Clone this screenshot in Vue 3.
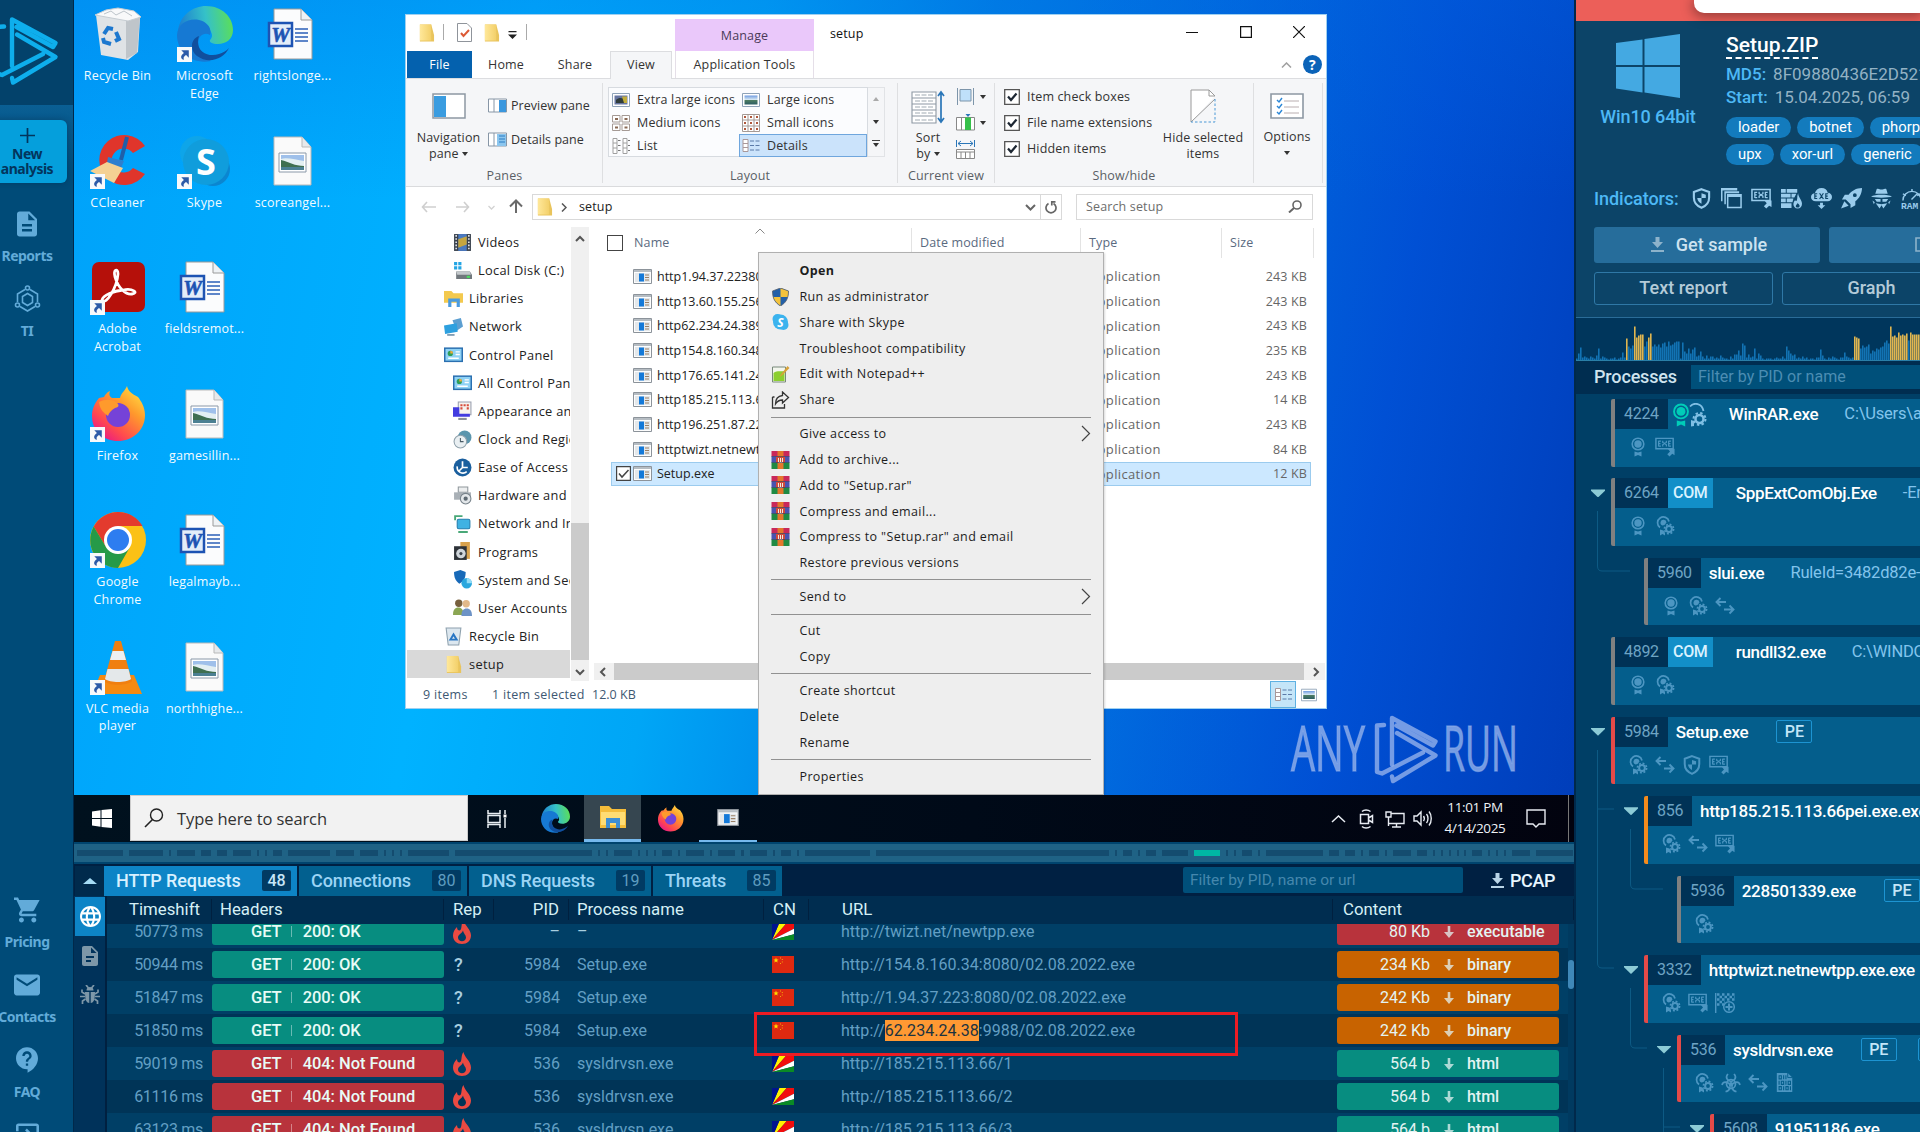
<script setup>
const shortcuts = [
  { label: 'Recycle Bin', icon: 'bin' },
  { label: 'Microsoft Edge', icon: 'edge', link: true },
  { label: 'rightslonge...', icon: 'word' },
  { label: 'CCleaner', icon: 'ccleaner', link: true },
  { label: 'Skype', icon: 'skype', link: true },
  { label: 'scoreangel...', icon: 'picture' },
  { label: 'Adobe Acrobat', icon: 'acrobat', link: true },
  { label: 'fieldsremot...', icon: 'word' },
  null,
  { label: 'Firefox', icon: 'firefox', link: true },
  { label: 'gamesillin...', icon: 'picture' },
  null,
  { label: 'Google Chrome', icon: 'chrome', link: true },
  { label: 'legalmayb...', icon: 'word' },
  null,
  { label: 'VLC media player', icon: 'vlc', link: true },
  { label: 'northhighe...', icon: 'picture' },
  null,
]

const navItems = [
  { label: 'Videos', icon: 'n-video', deep: true },
  { label: 'Local Disk (C:)', icon: 'n-disk', deep: true },
  { label: 'Libraries', icon: 'n-lib' },
  { label: 'Network', icon: 'n-net' },
  { label: 'Control Panel', icon: 'n-cp' },
  { label: 'All Control Panel Items', icon: 'n-cp', deep: true },
  { label: 'Appearance and Personalization', icon: 'n-app', deep: true },
  { label: 'Clock and Region', icon: 'n-clock', deep: true },
  { label: 'Ease of Access', icon: 'n-ease', deep: true },
  { label: 'Hardware and Sound', icon: 'n-hw', deep: true },
  { label: 'Network and Internet', icon: 'n-ni', deep: true },
  { label: 'Programs', icon: 'n-prog', deep: true },
  { label: 'System and Security', icon: 'n-sec', deep: true },
  { label: 'User Accounts', icon: 'n-user', deep: true },
  { label: 'Recycle Bin', icon: 'n-bin' },
  { label: 'setup', icon: 'folder', on: true },
]

const files = [
  ['http1.94.37.2238080', '243 KB'],
  ['http13.60.155.256', '243 KB'],
  ['http62.234.24.389988', '243 KB'],
  ['http154.8.160.348080', '235 KB'],
  ['http176.65.141.24', '243 KB'],
  ['http185.215.113.66', '14 KB'],
  ['http196.251.87.22', '243 KB'],
  ['httptwizt.netnewtpp', '84 KB'],
  ['Setup.exe', '12 KB'],
]

const menu = [
  [
    { t: 'Open', bold: true },
    { t: 'Run as administrator', icon: 'm-shield' },
    { t: 'Share with Skype', icon: 'm-skype' },
    { t: 'Troubleshoot compatibility' },
    { t: 'Edit with Notepad++', icon: 'm-npp' },
    { t: 'Share', icon: 'm-share' },
  ],
  [
    { t: 'Give access to', sub: true },
    { t: 'Add to archive...', icon: 'm-rar' },
    { t: 'Add to "Setup.rar"', icon: 'm-rar' },
    { t: 'Compress and email...', icon: 'm-rar' },
    { t: 'Compress to "Setup.rar" and email', icon: 'm-rar' },
    { t: 'Restore previous versions' },
  ],
  [{ t: 'Send to', sub: true }],
  [{ t: 'Cut' }, { t: 'Copy' }],
  [{ t: 'Create shortcut' }, { t: 'Delete' }, { t: 'Rename' }],
  [{ t: 'Properties' }],
]

const strip = [
  77, 123, 129, 163, 169, 171, 177, 195, 201, 211, 217, 227, 233, 251, 257, 259, 265, 267, 273, 282, 288, 330, 336, 354,
  360, 378, 384, 386, 392, 394, 400, 402, 408, 449, 455, 592, 598, 600, 606, 608, 614, 632, 638, 640, 646, 648, 654, 656,
  662, 672, 678, 680, 686, 704, 710, 712, 718, 735, 741, 744, 750, 767, 773, 775, 781, 791, 797, 799, 805, 870, 876, 1109,
  1115, 1117, 1123, 1132, 1138, 1140, 1146, 1156, 1162, 1188, 1194, 1220, 1226, 1228, 1234, 1236, 1242, 1252, 1258, 1260,
  1266, 1323, 1329, 1339, 1345, 1355, 1361, 1363, 1369, 1379, 1385, 1387, 1393, 1411, 1417, 1427, 1433, 1435, 1441, 1443,
  1449, 1451, 1457, 1459, 1464, 1466, 1472, 1482, 1488, 1490, 1496, 1498, 1504, 1506, 1512, 1530, 1536, 1573,
]
const stripBlocks = []
for (let i = 0; i < strip.length; i += 2) {
  stripBlocks.push({ x: strip[i] - 74, w: strip[i + 1] - strip[i], on: strip[i] === 1194 })
}

const tabs = [
  { t: 'HTTP Requests', n: 48, w: 193, on: true },
  { t: 'Connections', n: 80, w: 168 },
  { t: 'DNS Requests', n: 19, w: 182 },
  { t: 'Threats', n: 85, w: 129 },
]

const requests = [
  { ms: 50773, ok: true, pid: '–', name: '–', cn: 'sc', url: ['http://twizt.net/newtpp.exe'], size: '80 Kb', kind: 'executable' },
  { ms: 50944, ok: true, pid: '5984', name: 'Setup.exe', cn: 'cn', url: ['http://154.8.160.34:8080/02.08.2022.exe'], size: '234 Kb', kind: 'binary' },
  { ms: 51847, ok: true, pid: '5984', name: 'Setup.exe', cn: 'cn', url: ['http://1.94.37.223:8080/02.08.2022.exe'], size: '242 Kb', kind: 'binary' },
  { ms: 51850, ok: true, pid: '5984', name: 'Setup.exe', cn: 'cn', url: ['http://', '62.234.24.38', ':9988/02.08.2022.exe'], size: '242 Kb', kind: 'binary' },
  { ms: 59019, ok: false, pid: '536', name: 'sysldrvsn.exe', cn: 'sc', url: ['http://185.215.113.66/1'], size: '564 b', kind: 'html' },
  { ms: 61116, ok: false, pid: '536', name: 'sysldrvsn.exe', cn: 'sc', url: ['http://185.215.113.66/2'], size: '564 b', kind: 'html' },
  { ms: 63123, ok: false, pid: '536', name: 'sysldrvsn.exe', cn: 'sc', url: ['http://185.215.113.66/3'], size: '564 b', kind: 'html' },
]

const indicators = ['i-shield', 'i-windows', 'i-exe', 'i-wall', 'i-cloud', 'i-rocket', 'i-spy', 'i-ram']

const procs = [
  { lvl: 0, pid: '4224', cert: true, name: 'WinRAR.exe', pad: 21, args: 'C:\\Users\\admin', icons: ['p-cert', 'i-exe'] },
  { lvl: 0, open: true, pid: '6264', com: true, name: 'SppExtComObj.Exe', pad: 23, args: '-Embedding', icons: ['p-cert', 'p-certgear'] },
  { lvl: 1, pid: '5960', name: 'slui.exe', pad: 8, args: 'RuleId=3482d82e-ca2c', icons: ['p-cert', 'p-certgear', 'p-arrows'] },
  { lvl: 0, pid: '4892', com: true, name: 'rundll32.exe', pad: 23, args: 'C:\\WINDOWS', icons: ['p-cert', 'p-certgear'] },
  { lvl: 0, open: true, color: 'red', pid: '5984', name: 'Setup.exe', pad: 8, pe: true, icons: ['p-certgear', 'p-arrows', 'i-shield', 'i-exe'] },
  { lvl: 1, open: true, color: 'orange', pid: '856', name: 'http185.215.113.66pei.exe.exe', pad: 8, icons: ['p-certgear', 'p-arrows', 'i-exe'] },
  { lvl: 2, pid: '5936', name: '228501339.exe', pad: 8, pe: true, icons: ['p-certgear'] },
  { lvl: 1, open: true, color: 'red', pid: '3332', name: 'httptwizt.netnewtpp.exe.exe', pad: 8, icons: ['p-certgear', 'i-exe', 'p-flag'] },
  { lvl: 2, open: true, color: 'red', pid: '536', name: 'sysldrvsn.exe', pad: 8, pe: true, pe2: true, icons: ['p-certgear', 'p-bio', 'p-arrows', 'p-bin'] },
  { lvl: 3, open: true, color: 'red', pid: '5608', name: '91951186.exe', pad: 8, icons: [] },
]

const cpu = [
  2, 7, 13, 3, 4, 3, 2, 4, 3, 2, 5, 12, 2, 4, 3, 2, 1, 2, 2, 3, 1, 2, 3, 8, 3, -22, 14, 12, 15, -34, -23, -25, -26, -26,
  14, 19, -23, -27, 14, 16, 14, 16, 13, 17, 18, 14, 19, 15, 16, 18, 19, 19, 2, 18, 9, 7, 12, 7, 11, 13, 4, 5, 9, 4, 2, 5,
  2, 4, 4, 2, 3, 2, 5, 3, 2, 2, 1, 4, 2, 6, 6, 10, 5, 17, 15, 3, 6, 3, 4, 12, 2, 7, 5, 2, 1, 2, 2, 2, 1, 2, 3, 2, 2, 4,
  2, 14, 10, 7, 5, 6, 2, 3, 2, 4, 2, 3, 1, 2, 2, 1, 3, 3, 11, 5, 2, 1, 3, 2, 4, 3, 2, 1, 3, 3, 8, 4, 3, 2, 3, -24, -23,
  -22, 12, 15, 13, 14, 16, 7, 10, 9, 12, 11, 13, 14, 18, 20, 17, -34, -24, -25, -23, -28, -25, -26, -25, -27, 20, -28, -26,
  -26, -26, -26, -26,
]
</script>

<template>
  <div class="page">
    <svg class="sprite" aria-hidden="true">
      <defs>
        <linearGradient id="gEdge" x1="0" y1="0.3" x2="1" y2="0.2"><stop offset="0" stop-color="#1d7fd0" /><stop offset=".5" stop-color="#35c1c8" /><stop offset="1" stop-color="#5ee052" /></linearGradient>
        <linearGradient id="gFox" x1="1" y1="0" x2="0.2" y2="1"><stop offset="0" stop-color="#fff04a" /><stop offset=".4" stop-color="#ff9a2c" /><stop offset=".75" stop-color="#ff4a4e" /><stop offset="1" stop-color="#e7158a" /></linearGradient>
        <linearGradient id="gPic" x1="0" y1="0" x2="0" y2="1"><stop offset="0" stop-color="#6f9be0" /><stop offset=".5" stop-color="#dfeef4" /><stop offset=".55" stop-color="#4c7b62" /><stop offset="1" stop-color="#2c5d63" /></linearGradient>
        <linearGradient id="gFold" x1="0" x2="1"><stop offset="0" stop-color="#ffe89a" /><stop offset="1" stop-color="#f3d06a" /></linearGradient>

        <symbol id="logo" viewBox="-6 16 66 70"><g fill="none" stroke="currentColor" stroke-width="4.400" stroke-linejoin="round" stroke-linecap="round"><path d="M12 66V19.500L55.500 43L53 47L16.500 27" /><path d="M17 34.500L55.500 57L13 82.500L12 78" /><path d="M4 26.500L-3 27V73.500L2 75L43 54" /></g></symbol>

        <symbol id="bin" viewBox="0 0 56 56"><path d="M6 9L11 49L38 54L48 46L50 12Z" fill="#dfe3e6" /><path d="M36 14L50 11L47 47L36 53Z" fill="#bfc5ca" /><path d="M5 9L16 4L28 2L44 5L51 11L38 15Z" fill="#f8f9fa" stroke="#c6cdd3" /><path d="M14 8L21 5L26 9L34 5L42 10" fill="none" stroke="#bcc4ca" /><path d="M14 28l4-6 5 1M26 26l3 7-4 2M21 38l-7-2-1-4" fill="none" stroke="#1c78cf" stroke-width="4" /></symbol>
        <symbol id="edge" viewBox="0 0 56 56"><path d="M1 25C3 9 16 0 29 0c16 0 27 11 27 24 0 9-7 14-15 14-6 0-9-2-8-4 3-3 2-6 1-8C29 13 9 14 1 25Z" fill="url(#gEdge)" /><path d="M0 29C1 17 12 12 22 14c9 2 13 9 11 15-7-4-14 3-11 12 2 6 7 12 12 14C14 59 0 45 0 29Z" fill="#1679d3" /><path d="M22 30c-5 15 9 22 20 18 6-2 8-4 10-6C46 54 31 58 20 50c-7-5-7-17 2-20Z" fill="#104f9e" /></symbol>
        <symbol id="word" viewBox="4 0 56 56"><path d="M13 3H40L51 14V53H13Z" fill="#fbfcfd" stroke="#9a9a9a" /><path d="M40 3V14H51" fill="#eef2f5" stroke="#9a9a9a" /><path d="M34 23h13M34 27h13M34 31h13M34 35h13" stroke="#2b5fb8" stroke-width="1.300" /><path d="M8 17H31V40H8Z" fill="#e3edf9" stroke="#1d53b3" stroke-width="2.500" /><text x="19.500" y="35.500" text-anchor="middle" font-family="Liberation Serif, serif" font-weight="bold" font-style="italic" font-size="21" fill="#1d53b3" stroke="#1d53b3" stroke-width=".6">W</text></symbol>
        <symbol id="picture" viewBox="4 0 56 56"><path d="M13 4H41L50 14V52H13Z" fill="#fafafa" stroke="#b9b9b9" /><path d="M41 4V14H50" fill="#e7e9eb" stroke="#b9b9b9" /><path d="M18 20H45V39H18Z" fill="#fff" stroke="#8a98a8" /><path d="M20 22H43V37H20Z" fill="#9fc0ea" /><path d="M20 26C25 24 36 27 43 28V37H20Z" fill="#e3eff2" /><path d="M20 27C28 29 34 33 43 33V35H20Z" fill="#3f6f50" /><path d="M20 34H43V37H20Z" fill="#4c8093" /></symbol>
        <symbol id="ccleaner" viewBox="0 0 56 56"><path d="M55 13A25 25 0 1 0 55 41L43 35A12 12 0 1 1 43 20Z" fill="#e0352b" /><path d="M37 4L31 27" stroke="#1f5fa8" stroke-width="4" /><path d="M18 24L34 28L31 35L17 30Z" fill="#2d7fcf" /><path d="M17 29L33 35L24 50L0 38Z" fill="#f4d193" /></symbol>
        <symbol id="skype" viewBox="0 0 56 56"><circle cx="20" cy="20" r="17" fill="#0ea5e9" /><circle cx="36" cy="36" r="17" fill="#0b86d0" /><circle cx="29" cy="29" r="23" fill="#109ddc" /><text x="29" y="42" text-anchor="middle" font-family="Open Sans, sans-serif" font-weight="bold" font-size="36" fill="#fff">S</text></symbol>
        <symbol id="acrobat" viewBox="0 0 56 56"><rect x="2" y="3" width="53" height="50" rx="7" fill="#b5100a" /><path d="M12 41c4 6 15-13 16-26 0-6-5-5-3 3 3 11 11 18 17 17 7-1 1-6-9-4-9 1-20 5-21 10Z" fill="none" stroke="#fff" stroke-width="2.800" /></symbol>
        <symbol id="firefox" viewBox="0 0 56 56"><path d="M37 0c-2 5-6 7-7 12l-8 0c-3-2-3-4-2-7-3 1-5 4-6 6L9 12C4 18 2 24 2 30c0 15 12 25 26 25s27-10 27-26c0-8-4-14-7-18C42 8 38 5 37 0Z" fill="url(#gFox)" /><circle cx="28" cy="29" r="12" fill="#7542d8" /><path d="M9 16c6-3 12-3 17 0 3 2 4 5-1 6-4 2-6 5-7 8-4-3-8-6-9-14Z" fill="#ff9a2c" /></symbol>
        <symbol id="chrome" viewBox="0 0 56 56"><circle cx="28" cy="28" r="28" fill="#fbc116" /><path d="M28 0A28 28 0 0 1 52.500 14H28L16 35L3.700 14.500A28 28 0 0 1 28 0Z" fill="#e33b2e" /><path d="M3.700 14.500L16 35L28 42L40 35L28 56A28 28 0 0 1 3.700 14.500Z" fill="#269a48" /><circle cx="28" cy="28" r="14" fill="#fff" /><circle cx="28" cy="28" r="11" fill="#2d7df0" /></symbol>
        <symbol id="vlc" viewBox="0 0 56 56"><path d="M10 36H44L52 55H2Z" fill="#f58a12" /><path d="M25 2H31L42 42C38 47 18 47 14 42Z" fill="#f07f10" /><path d="M22.500 12H33.500L36 21H20Z" fill="#eef0f2" /><path d="M17.500 30H38.500L41 40C36 44 20 44 15 40Z" fill="#e4e8ea" /></symbol>
        <symbol id="link" viewBox="0 0 14 14"><path d="M0 0H14V14H0Z" fill="#f7f9fb" /><path d="M4 3h7v7l-2.500-2.500C6 9 6 10 6.500 12 3 11 3 8 6.500 5.500Z" fill="#2c5aa8" /></symbol>

        <symbol id="folder" viewBox="0 0 18 20"><path d="M2 1H14L17 12V19H2Z" fill="#e9c45c" /><path d="M2 1H14V18H2Z" fill="url(#gFold)" /></symbol>
        <symbol id="n-video" viewBox="0 0 18 18"><path d="M1 1H17V17H1Z" fill="#38404c" /><path d="M5 1H13V17H5Z" fill="#4a79c0" /><path d="M5 6l8-3v8l-8 3Z" fill="#c5a53f" /><path d="M3 2v14M15 2v14" stroke="#e5e9ee" stroke-width="1.500" stroke-dasharray="1.500 1.500" /></symbol>
        <symbol id="n-disk" viewBox="0 0 18 18"><path d="M3 10H16L18 13V17H3Z" fill="#71787d" /><path d="M3 10H16L17 13H4Z" fill="#c4c9cc" /><path d="M1 1H4V4H1ZM5 1H8V4H5ZM1 5H4V8H1ZM5 5H8V8H5Z" fill="#24a5e4" /><path d="M13 14h3v2h-3Z" fill="#4be060" /></symbol>
        <symbol id="n-lib" viewBox="0 0 18 18"><path d="M0 2H7L9 4H18V13H0Z" fill="#f3c94e" /><path d="M4 9H15V17H12V12H7V17H4Z" fill="#4a9be0" /></symbol>
        <symbol id="n-net" viewBox="0 0 18 18"><path d="M8 3L16 1L18 9L12 13Z" fill="#5c9fd1" /><path d="M0 8L12 6L13 14L1 16Z" fill="#2da0df" /><path d="M3 17h7" stroke="#6c8da7" stroke-width="1.500" /></symbol>
        <symbol id="n-cp" viewBox="0 0 18 18"><rect x=".7" y="3" width="16.600" height="12.500" fill="#8fd2f5" stroke="#2a6fb0" stroke-width="1.400" /><circle cx="6" cy="8" r="2.500" fill="#2e9e58" /><path d="M6 8V5.500A2.500 2.500 0 0 1 8.500 8Z" fill="#f2a93a" /><path d="M11 6.500h4M11 9h4M4 12.500h10" stroke="#fff" stroke-width="1.300" /></symbol>
        <symbol id="n-app" viewBox="0 0 18 18"><path d="M5 1H17V13H5Z" fill="#f6f3ee" stroke="#9aa0b0" /><path d="M7 3h2v2h-2ZM10 3h2v2h-2ZM13 3h2v2h-2ZM7 6h2v2h-2ZM13 6h2v2h-2Z" fill="#d64d3d" /><path d="M0 6H6V12H16V15H0Z" fill="#433ce0" /><path d="M5 17h8" stroke="#8b9099" stroke-width="2" /></symbol>
        <symbol id="n-clock" viewBox="0 0 18 18"><circle cx="11" cy="7" r="6.500" fill="#5a95ad" /><circle cx="7" cy="11" r="6" fill="#e9eff2" stroke="#8fa0aa" /><path d="M7 7.500V11H10" fill="none" stroke="#4a5b66" /></symbol>
        <symbol id="n-ease" viewBox="0 0 18 18"><circle cx="9" cy="9" r="8.500" fill="#1a5f9e" /><path d="M9 3V9H14M9 9L5 13M4 8a5.500 5.500 0 0 0 9 5" fill="none" stroke="#fff" stroke-width="1.600" /></symbol>
        <symbol id="n-hw" viewBox="0 0 18 18"><path d="M5 1H14V6H5Z" fill="#eceeef" stroke="#8f979c" /><path d="M1 6H17V13H1Z" fill="#a9b0b6" /><circle cx="12" cy="12" r="5" fill="#e3e7ea" stroke="#78838b" /><circle cx="12" cy="12" r="2" fill="#5e6a73" /></symbol>
        <symbol id="n-ni" viewBox="0 0 18 18"><rect x="4" y="5" width="12" height="9" rx="1.500" fill="#3fb2e3" stroke="#257fae" /><path d="M2 6V2h7M5 17h9" fill="none" stroke="#49a878" stroke-width="1.800" /></symbol>
        <symbol id="n-prog" viewBox="0 0 18 18"><path d="M7 0H16V16H7Z" fill="#d9a24d" /><path d="M1 4H13V17H1Z" fill="#2d3238" /><circle cx="7.500" cy="11" r="4.500" fill="#cfd5da" /><circle cx="7.500" cy="11" r="1.500" fill="#3a4148" /></symbol>
        <symbol id="n-sec" viewBox="0 0 18 18"><path d="M1 2L7 0L12 2C12 8 10 11 6 13C2 10 1 7 1 2Z" fill="#1769b8" /><circle cx="13" cy="12.500" r="5" fill="#2aa7de" /><path d="M13 12.500V7.500A5 5 0 0 1 18 12.500Z" fill="#93dcf6" /></symbol>
        <symbol id="n-user" viewBox="0 0 18 18"><circle cx="5.500" cy="5" r="3.500" fill="#77603e" /><circle cx="12.500" cy="5.500" r="3.500" fill="#e2b98a" /><path d="M0 16c0-5 2-7 5-7s5 2 5 7Z" fill="#8ba653" /><path d="M8 17c0-5 2-7 5-7s5 2 5 7Z" fill="#6d93c6" /></symbol>
        <symbol id="n-bin" viewBox="0 0 18 18"><path d="M2 1H16L14 17H4Z" fill="#dce7ef" stroke="#8da0ad" /><path d="M6 12l3-5 3 5Z" fill="none" stroke="#2876c4" stroke-width="1.800" /></symbol>
        <symbol id="exe" viewBox="0 0 19 15"><path d="M.5.5H18.500V14.500H.5Z" fill="#fdfdfd" stroke="#8c939a" /><path d="M1 1H18V3H1Z" fill="#b6bdc3" /><path d="M2 4H17V13H2Z" fill="#e4e8eb" /><path d="M6 4.500H11V12.500H6Z" fill="#1479d8" /><path d="M12 6h4M12 8.500h4M12 11h4" stroke="#9a8066" /></symbol>

        <symbol id="m-shield" viewBox="0 0 18 18"><path d="M9 0L17 3C17 11 14 15 9 18C4 15 1 11 1 3Z" fill="#2360a8" /><path d="M9 0L17 3L16.500 9H9ZM9 9V18C5 15 2 12 1.500 9Z" fill="#f4c33c" /><path d="M9 0L17 3C17 11 14 15 9 18C4 15 1 11 1 3Z" fill="none" stroke="#55606d" stroke-width=".8" /></symbol>
        <symbol id="m-skype" viewBox="0 0 18 18"><circle cx="6" cy="6" r="5" fill="#3bb3ee" /><circle cx="12" cy="12" r="5" fill="#3bb3ee" /><circle cx="9" cy="9" r="7.500" fill="#3bb3ee" /><text x="9" y="13.500" text-anchor="middle" font-family="Open Sans, sans-serif" font-weight="bold" font-size="12" fill="#fff">S</text></symbol>
        <symbol id="m-npp" viewBox="0 0 18 18"><path d="M1 2H14V17H1Z" fill="#f3f6ee" stroke="#78897a" /><path d="M2 8C6 5 10 7 13 6V16H2Z" fill="#8ccf2f" /><path d="M16 1L9 10L8 12L11 10L18 3Z" fill="#d7a23a" /></symbol>
        <symbol id="m-share" viewBox="0 0 18 18"><path d="M1 6V17H13V13M1 6H3M11 1L17 6.500L11 12V9C7 9 5.500 10.500 4 13C4 8 7 5 11 4.500Z" fill="none" stroke="#333" stroke-width="1.300" /></symbol>
        <symbol id="m-rar" viewBox="0 0 18 18"><path d="M0 0H18V5.500H0Z" fill="#c9285a" /><path d="M0 5.500H18V11.500H0Z" fill="#4a53b0" /><path d="M0 11.500H18V18H0Z" fill="#1f8a43" /><path d="M6 0H12V18H6Z" fill="#e4772c" /><path d="M4.500 6H13.500V12H4.500Z" fill="#cf4a3c" /><path d="M7 7V11M9 7V11M11 7V11M7 11.500H11" stroke="#f4ecdc" /><path d="M0 5.500H18M0 11.500H18" stroke="#23305a" stroke-width=".6" /></symbol>
        <symbol id="details" viewBox="0 0 18 16"><path d="M1 1.500h5v12H1ZM1 5.500h5M1 9.500h5" fill="#fff" stroke="#a9989a" /><path d="M8 3h4M13.500 3h4M8 7.500h4M13.500 7.500h4M8 12h4M13.500 12h4" stroke="#5b7aa8" /></symbol>
        <symbol id="pic-sm" viewBox="0 0 18 14"><path d="M.5.5H17.500V13.500H.5Z" fill="#fff" stroke="#8ea2b8" /><path d="M2.500 2.500H15.500V11.500H2.500Z" fill="url(#gPic)" /></symbol>
        <symbol id="pic-xl" viewBox="0 0 18 14"><path d="M.5.5H17.500V13.500H.5Z" fill="#fff" stroke="#8ea2b8" /><path d="M2.500 2.500H15.500V11.500H2.500Z" fill="#6675a0" /><path d="M4 7C7 4 11 5 14 7V10H4Z" fill="#2f3b3a" /><path d="M10 3.500H15V10H12Z" fill="#c2ad3a" /></symbol>

        <symbol id="doc" viewBox="4 2 16 20"><path d="M6 2c-1.100 0-2 .9-2 2v16c0 1.100.9 2 2 2h12c1.100 0 2-.9 2-2V8l-6-6H6Zm10 16H8v-2h8v2Zm0-4H8v-2h8v2Zm-3-5V3.500L18.500 9H13Z" fill="currentColor" /></symbol>
        <symbol id="doc2" viewBox="4 2 16 20"><path d="M6 2c-1.100 0-2 .9-2 2v16c0 1.100.9 2 2 2h12c1.100 0 2-.9 2-2V8l-6-6H6Zm7 16H8v-2h5v2Zm3-4H8v-2h8v2Zm-3-5V3.500L18.500 9H13Z" fill="currentColor" /></symbol>
        <symbol id="ti" viewBox="0 0 26 28"><g fill="none" stroke="currentColor" stroke-width="1.600"><path d="M10.500 4.500L3 9V17M15.500 4.500L23 9V17M5.500 21.500L13 26L20.500 21.500" /><path d="M13 8.500L18 11.500V17.500L13 20.500L8 17.500V11.500Z" /><circle cx="13" cy="3" r="2" /><circle cx="3" cy="20" r="2" /><circle cx="23" cy="20" r="2" /></g></symbol>
        <symbol id="cart" viewBox="1 2 21 20"><path d="M7 18c-1.100 0-2 .9-2 2s.9 2 2 2 2-.9 2-2-.9-2-2-2ZM1 2v2h2l3.600 7.600-1.350 2.450C4.520 15.370 5.480 17 7 17h12v-2H7.420c-.14 0-.25-.11-.25-.25L8.100 13h7.450c.75 0 1.410-.41 1.750-1.030L21.700 4H5.210l-.94-2H1Zm16 16c-1.100 0-2 .9-2 2s.9 2 2 2 2-.9 2-2-.9-2-2-2Z" fill="currentColor" /></symbol>
        <symbol id="mail" viewBox="2 4 20 16"><path d="M20 4H4c-1.100 0-2 .9-2 2v12c0 1.100.9 2 2 2h16c1.100 0 2-.9 2-2V6c0-1.100-.9-2-2-2Zm0 4l-8 5-8-5V6l8 5 8-5v2Z" fill="currentColor" /></symbol>
        <symbol id="faq" viewBox="2 2 19 22"><path d="M11.500 2C6.250 2 2 6.250 2 11.500S6.250 21 11.500 21h.5v3c4.860-2.340 9-7 9-12.500C21 6.250 16.750 2 11.500 2Zm1 16h-2v-2h2v2Zm0-3.500h-2c0-3.250 3-3 3-5 0-1.100-.9-2-2-2s-2 .9-2 2h-2c0-2.210 1.790-4 4-4s4 1.790 4 4c0 2.500-3 2.750-3 5Z" fill="currentColor" /></symbol>
        <symbol id="exit" viewBox="3 3 18 18"><path d="M10.090 15.590L11.500 17l5-5-5-5-1.410 1.410L12.670 11H3v2h9.670l-2.580 2.590ZM19 3H5a2 2 0 0 0-2 2v4h2V5h14v14H5v-4H3v4a2 2 0 0 0 2 2h14c1.100 0 2-.9 2-2V5c0-1.100-.9-2-2-2Z" fill="currentColor" /></symbol>
        <symbol id="globe" viewBox="2 2 20 20"><path d="M12 2C6.480 2 2 6.480 2 12s4.480 10 10 10 10-4.480 10-10S17.520 2 12 2Zm6.930 6h-2.950a15.650 15.650 0 0 0-1.380-3.560A8.030 8.030 0 0 1 18.920 8ZM12 4.040c.83 1.200 1.480 2.530 1.910 3.960h-3.820c.43-1.430 1.080-2.760 1.910-3.960ZM4.260 14a8.200 8.200 0 0 1 0-4h3.380a16.500 16.500 0 0 0 0 4H4.260Zm.82 2h2.950c.32 1.250.78 2.450 1.380 3.560A7.990 7.990 0 0 1 5.080 16Zm2.950-8H5.080a7.990 7.990 0 0 1 4.330-3.560A15.650 15.650 0 0 0 8.030 8ZM12 19.960c-.83-1.200-1.480-2.530-1.910-3.960h3.820A13.500 13.500 0 0 1 12 19.960ZM14.340 14H9.660a14.700 14.700 0 0 1 0-4h4.680a14.700 14.700 0 0 1 0 4Zm.25 5.560c.6-1.110 1.060-2.310 1.380-3.560h2.950a8.030 8.030 0 0 1-4.330 3.560ZM16.360 14a16.500 16.500 0 0 0 0-4h3.380a8.200 8.200 0 0 1 0 4h-3.380Z" fill="currentColor" /></symbol>
        <symbol id="bug" viewBox="0 0 20 20"><path d="M6.500 5.500a3.500 3.500 0 0 1 7 0ZM5 7H9.300V18C6 18 5 14 5 7ZM10.700 7H15C15 14 14 18 10.700 18Z" fill="currentColor" /><path d="M6 0L8.500 3M14 0L11.500 3M5 9L2 7V4.500M15 9L18 7V4.500M5 11.500H0M15 11.500H20M5.500 14L2.500 16V19M14.500 14L17.500 16V19" fill="none" stroke="currentColor" stroke-width="1.700" /></symbol>
        <symbol id="fire" viewBox="0 0 18 24"><path d="M10.500 0C11 5 18 9 18 15.500C18 20.500 14 24 9 24S0 20.500 0 15.500C0 12 1.800 9 4 7C4 9.500 5 10.500 6.500 10.500C9.500 10 7.500 3.500 10.500 0ZM10 10.500C9 13.500 5 14.500 5 17.500C5 20 7 21.300 9 21.300S13 19.800 13 17.500C13 15 10.800 14 10 10.500Z" fill="#ea4a42" fill-rule="evenodd" /></symbol>
        <symbol id="down" viewBox="0 0 10 12"><path d="M3.700 0H6.300V6H10L5 12L0 6H3.700Z" fill="currentColor" /></symbol>
        <symbol id="save" viewBox="0 0 13 15"><path d="M4.500 0H8.500V5H12L6.500 11L1 5H4.500ZM0 13H13V15H0Z" fill="currentColor" /></symbol>
        <symbol id="cn" viewBox="0 0 22 17"><path d="M0 0H22V17H0Z" fill="#de2910" /><path d="M4 1.500L4.700 3.500H6.600L5.100 4.700L5.700 6.600L4 5.500L2.300 6.600L2.900 4.700L1.400 3.500H3.300Z" fill="#ffde00" /><path d="M8 1.500h1v1H8ZM9.800 3h1v1h-1ZM9.800 5.500h1v1h-1ZM8 7h1v1H8Z" fill="#f5a60a" /></symbol>
        <symbol id="sc" viewBox="0 0 22 17"><path d="M0 17L7.300 0H14.700Z" fill="#fff200" /><path d="M0 17L14.700 0H22V5.700Z" fill="#f20d0d" /><path d="M0 17L22 5.700V11.300Z" fill="#fff" /><path d="M0 17L22 11.300V17Z" fill="#0a8a25" /><path d="M0 0H7.300L0 17Z" fill="#00138f" /></symbol>

        <symbol id="i-shield" viewBox="0 0 20 22"><path d="M10 1.300L18 4.200V10C18 15 14.500 19 10 20.700C5.500 19 2 15 2 10V4.200Z" fill="none" stroke="currentColor" stroke-width="2.200" /><path d="M10 5.500V10.500H14.500C14.500 9 14.500 8.500 14.500 7ZM10 10.500H5.500C6 13.500 7.500 15.300 10 16.500Z" fill="currentColor" /></symbol>
        <symbol id="i-windows" viewBox="0 0 22 22"><path d="M7 7H21V20.500H7Z" fill="none" stroke="currentColor" stroke-width="1.600" /><path d="M7 7H21V9.500H7ZM0 0H17V2.500H1.600V14H0ZM3.500 3.500H19V5.500H5.100V17H3.500Z" fill="currentColor" /></symbol>
        <symbol id="i-exe" viewBox="0 0 22 22"><path d="M1 1.500H20V13H1Z" fill="none" stroke="currentColor" stroke-width="1.600" /><path d="M4 4.500H6.500M4 10H6.500M4 7.200H6M4 4V10.500M8.500 4V6L10.500 7.200L12.500 6V4M8.500 10.500V8.500L10.500 7.200L12.500 8.500V10.500M15 4.500H17.500M15 10H17.500M15 7.200H17M15 4V10.500" fill="none" stroke="currentColor" stroke-width="1.300" /><path d="M14 13H21.500V20L19 18.500L16 21.500L13.500 19L16.500 16Z" fill="currentColor" /></symbol>
        <symbol id="i-wall" viewBox="0 0 22 22"><path d="M0 1H5V5H0ZM6 1H17V5H6ZM0 6H10V10H0ZM11 6H16L14 10H11ZM0 11H5V15H0ZM6 11H13L12 15H6ZM0 16H11V21H0Z" fill="currentColor" /><path d="M18 5.500C18 10 22 12 22 16.500C22 19.500 20 21.500 17.500 21.500C14.500 21.500 13 19 13 17C13 15 14 13.500 15 12.500C15 14 16 14 16.500 13C17.500 11 16.500 8.500 18 5.500ZM17.500 15.500C17 17.500 15.500 17.500 15.500 19C15.500 20 16.500 20.500 17.500 20.500S19.500 20 19.500 18.500C19.500 17.500 18 17 17.500 15.500Z" fill="currentColor" fill-rule="evenodd" /></symbol>
        <symbol id="i-cloud" viewBox="0 0 22 22"><path d="M5 14C2 14 0 12 0 9.500C0 7 2 5.500 4 5.500C5 2 8 0 11 0C14.500 0 17 2 17.500 5C20 5 22 7 22 9.500C22 12 20 14 17.500 14Z" fill="currentColor" /><path d="M4 6H6.500M4 11H6.500M4 8.500H6M4 5.500V11.500M9 5.500L13 11.500M13 5.500L9 11.500M15.500 6H18M15.500 11H18M15.500 8.500H17.500M15.500 5.500V11.500" fill="none" stroke="#0c4468" stroke-width="1.200" /><path d="M9.500 15.500H12.500V18H15L11 22L7 18H9.500Z" fill="currentColor" /></symbol>
        <symbol id="i-rocket" viewBox="0 0 22 22"><path d="M22 0C16 0 11 3 8 7H4L1 12H5L10 17V21L15 18V14C19 11 22 6 22 0ZM14.500 5.500A2 2 0 1 1 14.500 9.500A2 2 0 0 1 14.500 5.500Z" fill="currentColor" fill-rule="evenodd" /><path d="M3.500 14L0 21.500L8 18.500Z" fill="currentColor" /></symbol>
        <symbol id="i-spy" viewBox="0 0 22 22"><path d="M6 1C8 0 9 1.500 11 1.500S14 0 16 1L17.500 6H4.500ZM0 9C4 6.500 18 6.500 22 9C18 10.500 4 10.500 0 9ZM4 11.500H10V14.500H6ZM12 11.500H18L16 14.500H12ZM1.500 13L4 15L3 17ZM20.500 13L18 15L19 17ZM5 16L9 21.500L11 18L13 21.500L17 16L11 17Z" fill="currentColor" /></symbol>
        <symbol id="i-ram" viewBox="0 0 22 22"><path d="M2 13A9.500 9.500 0 0 1 21 13" fill="none" stroke="currentColor" stroke-width="1.500" /><path d="M2 6L5 8M11.500 1V4M20 6L17 8M11 12L17 6" stroke="currentColor" stroke-width="1.500" /><text x="0" y="22" font-family="Liberation Mono, monospace" font-weight="bold" font-size="9.500" textLength="18" lengthAdjust="spacingAndGlyphs" fill="currentColor">RAM</text></symbol>

        <symbol id="p-cert" viewBox="0 0 20 20"><circle cx="10" cy="7" r="5.800" fill="none" stroke="currentColor" stroke-width="1.600" /><circle cx="10" cy="7" r="3.700" fill="currentColor" /><path d="M6.500 14.500L10 15.500L13.500 14.500V19.500L10 18L6.500 19.500Z" fill="currentColor" /></symbol>
        <symbol id="p-certgear" viewBox="0 0 20 20"><path d="M5 11.500A5.800 5.800 0 1 1 14 5.500" fill="none" stroke="currentColor" stroke-width="1.700" /><path d="M7.500 9.500A3 3 0 1 1 11.500 6.500L9.500 9Z" fill="currentColor" /><path d="M5 13.500L8.500 14.500L10 17V19.500L7.500 18L5 19.500Z" fill="currentColor" /><circle cx="14" cy="13" r="2.900" fill="none" stroke="currentColor" stroke-width="2" /><circle cx="14" cy="13" r="4.600" fill="none" stroke="currentColor" stroke-width="1.700" stroke-dasharray="1.900 1.710" /></symbol>
        <symbol id="p-arrows" viewBox="0 0 20 18"><path d="M11 5H1.500M5.500 1L1.500 5L5.500 9M9 12.500H18.500M14.500 8.500L18.500 12.500L14.500 16.500" fill="none" stroke="currentColor" stroke-width="1.900" /></symbol>
        <symbol id="p-flag" viewBox="0 0 20 20"><path d="M.7 0V20" stroke="currentColor" stroke-width="1.400" /><path d="M2 1.500H20M2 6.500H20M2 11.500H9" stroke="currentColor" stroke-width="2.500" stroke-dasharray="2.500 2.500" /><path d="M4.500 4H20M4.500 9H10" stroke="currentColor" stroke-width="2.500" stroke-dasharray="2.500 2.500" /><circle cx="14" cy="14" r="5.300" fill="#045e8c" stroke="currentColor" stroke-width="1.500" /><path d="M14 10.500V17.500M10.500 14H17.500" stroke="currentColor" stroke-width="2" /></symbol>
        <symbol id="p-bio" viewBox="0 0 20 20"><g fill="none" stroke="currentColor" stroke-width="1.700"><path d="M7 1C4 4 6 8 10 8.500C14 8 16 4 13 1M1 12C2 8 6 8.500 8.500 11C10 14 8.500 18.500 4.500 18.500M19 12C18 8 14 8.500 11.500 11C10 14 11.500 18.500 15.500 18.500" /><circle cx="10" cy="11" r="4.500" /></g><circle cx="10" cy="11" r="2" fill="currentColor" /></symbol>
        <symbol id="p-bin" viewBox="0 0 18 22"><path d="M0 0H12L17 5V21H0Z" fill="currentColor" /><path d="M12 0V5H17" fill="none" stroke="#045e8c" /><g fill="none" stroke="#045e8c" stroke-width="1.200"><path d="M2.500 3H5V6.500H2.500ZM7.500 2.500V7M10 2.500V7M2.500 8.500V13M5 9H7.500V12.500H5ZM10 8.500V13M12.500 9H15V12.500H12.500ZM2.500 15H5V18.500H2.500ZM7.500 14.500V19M10 15H12.500V18.500H10ZM15 14.500V19" /></g></symbol>
      </defs>
    </svg>

    <aside class="side">
      <div class="brand"><svg class="brand-logo"><use href="#logo" /></svg></div>
      <div class="side-body">
        <button class="new"><svg width="15" height="15" viewBox="0 0 15 15"><path d="M7.500 0V15M0 7.500H15" stroke="#03355c" stroke-width="1.700" /></svg><span>New<br />analysis</span></button>
        <nav class="side-nav top">
          <a><svg width="20" height="26"><use href="#doc" /></svg><span>Reports</span></a>
          <a><svg width="27" height="28"><use href="#ti" /></svg><span>TI</span></a>
        </nav>
        <nav class="side-nav bottom">
          <a><svg width="26" height="26"><use href="#cart" /></svg><span>Pricing</span></a>
          <a><svg width="26" height="21"><use href="#mail" /></svg><span>Contacts</span></a>
          <a><svg width="22" height="26"><use href="#faq" /></svg><span>FAQ</span></a>
          <a><svg width="23" height="23"><use href="#exit" /></svg></a>
        </nav>
      </div>
    </aside>

    <main class="main">
      <section class="desktop">
        <div class="shortcuts">
          <div v-for="(s, i) in shortcuts" :key="i" class="shortcut">
            <template v-if="s">
              <div class="ico"><svg width="56" height="56"><use :href="'#' + s.icon" /></svg><svg v-if="s.link" class="link" width="15" height="15"><use href="#link" /></svg></div>
              <span>{{ s.label }}</span>
            </template>
          </div>
        </div>

        <svg class="watermark" width="228" height="76">
          <text x="1" y="59" textLength="74" lengthAdjust="spacingAndGlyphs">ANY</text>
          <text x="153" y="59" textLength="75" lengthAdjust="spacingAndGlyphs">RUN</text>
          <use href="#logo" x="84" y="0" width="66" height="75" />
        </svg>

        <div class="window">
          <header class="title">
            <div class="quick">
              <svg width="17" height="20"><use href="#folder" /></svg><i class="bar" />
              <svg class="q2" width="15" height="19" viewBox="0 0 15 19"><path d="M.5.5H10L14.500 5V18.500H.5Z" fill="#fff" stroke="#8f949b" /><path d="M4 10L6.500 13L12 7" fill="none" stroke="#dc5a36" stroke-width="2" /></svg>
              <svg class="q3" width="17" height="20"><use href="#folder" /></svg>
              <svg class="q4" width="9" height="8" viewBox="0 0 9 8"><path d="M.5 0H8.500V1.300H.5ZM0 3.500H9L4.500 8Z" fill="#222" /></svg><i class="bar q5" />
            </div>
            <div class="manage">Manage</div>
            <div class="caption">setup</div>
            <div class="wbtns">
              <svg width="12" height="12" viewBox="0 0 12 12"><path d="M0 6.500H12" stroke="#111" /></svg>
              <svg width="12" height="12" viewBox="0 0 12 12"><path d="M.6.6H11.400V11.400H.6Z" fill="none" stroke="#111" stroke-width="1.200" /></svg>
              <svg width="12" height="12" viewBox="0 0 12 12"><path d="M0 0L12 12M12 0L0 12" stroke="#111" stroke-width="1.200" /></svg>
            </div>
          </header>
          <div class="rtabs">
            <b class="file">File</b><span class="t-home">Home</span><span class="t-share">Share</span><span class="t-view">View</span><span class="t-tools">Application Tools</span>
            <div class="help"><svg width="11" height="6" viewBox="0 0 11 6"><path d="M1 5.500L5.500 1L10 5.500" fill="none" stroke="#a0a0a0" stroke-width="1.500" /></svg><em>?</em></div>
          </div>
          <div class="ribbon">
            <div class="group g-panes">
              <div class="gbody">
                <div class="big nav-big"><svg width="34" height="26" viewBox="0 0 34 26"><path d="M1 1H33V25H1Z" fill="#fff" stroke="#8d98a3" stroke-width="1.500" /><path d="M2 3H14V24H2Z" fill="#3a9ce0" /></svg><span>Navigation<br />pane <i class="dd" /></span></div>
                <div class="two"><span><svg width="19" height="15" viewBox="0 0 19 15"><path d="M.5 1H18.500V14H.5Z" fill="#fff" stroke="#8796a6" /><path d="M11 2H18V14H11Z" fill="#3a97de" /><path d="M6 1V14" stroke="#8796a6" /></svg>Preview pane</span><span><svg width="19" height="15" viewBox="0 0 19 15"><path d="M.5 1H18.500V14H.5Z" fill="#fff" stroke="#8796a6" /><path d="M9 2H18V14H9Z" fill="#8cc6ee" /><path d="M11 4h6M11 7h6M11 10h6" stroke="#2a7cc4" /><path d="M6 1V14" stroke="#8796a6" /></svg>Details pane</span></div>
              </div>
              <label>Panes</label>
            </div>
            <div class="group g-layout">
              <div class="gbody">
                <div class="gallery">
                  <span><svg width="17" height="14"><use href="#pic-xl" /></svg>Extra large icons</span><span><svg width="17" height="14"><use href="#pic-sm" /></svg>Large icons</span>
                  <span><svg width="18" height="16" viewBox="0 0 18 16"><path d="M.5.5H8V7H.5ZM10 .5H17.500V7H10ZM.5 9H8V15.500H.5ZM10 9H17.500V15.500H10Z" fill="#fff" stroke="#a59a95" /><path d="M3 3h3v2H3ZM12.500 3h3v2h-3ZM3 11.500h3v2H3ZM12.500 11.500h3v2h-3Z" fill="#8a6a55" /></svg>Medium icons</span>
                  <span><svg width="18" height="18" viewBox="0 0 18 18"><path d="M.5.5H17.500V17.500H.5ZM6 0V18M12 0V18M0 6H18M0 12H18" fill="#fff" stroke="#a59a95" /><path d="M3 2v2M9 2v2M15 2v2M3 8v2M9 8v2M15 8v2M3 14v2M9 14v2M15 14v2" stroke="#b0583c" stroke-width="2" /></svg>Small icons</span>
                  <span><svg width="18" height="16" viewBox="0 0 18 16"><path d="M1 .5h4v15H1ZM1 5h4M1 10h4M11 .5h4v15h-4ZM11 5h4M11 10h4" fill="#fff" stroke="#a0a0a0" /><path d="M6 2.500h2.500M6 7.500h2.500M6 12.500h2.500M16 2.500h2M16 7.500h2M16 12.500h2" stroke="#777" /></svg>List</span>
                  <span class="sel"><svg width="18" height="16"><use href="#details" /></svg>Details</span>
                </div>
                <div class="gscroll"><i class="up" /><i class="dd" /><i class="dd more" /></div>
              </div>
              <label>Layout</label>
            </div>
            <div class="group g-current">
              <div class="gbody">
                <div class="big sort-big"><svg width="34" height="34" viewBox="0 0 34 34"><path d="M1 2H25V33H1ZM1 8H25M1 14H25M1 20H25M1 26H25" fill="#fff" stroke="#8d98a3" stroke-width="1.100" /><path d="M4 5h18M4 11h18M4 17h18M4 23h18M4 30h18" stroke="#c0c6cc" stroke-width="1.500" stroke-dasharray="5 1.500" /><path d="M30 3V31M27 6L30 2L33 6M27 28L30 32L33 28" fill="none" stroke="#2a76b8" stroke-width="1.700" /></svg><span>Sort<br />by <i class="dd" /></span></div>
                <div class="three">
                  <span><svg width="19" height="17" viewBox="0 0 19 17"><path d="M1.500 0V17M17.500 0V17M4 1.500H15V13H4Z" fill="#bfe0fa" stroke="#7d95aa" /></svg><i class="dd" /></span>
                  <span><svg width="19" height="17" viewBox="0 0 19 17"><path d="M.5 3.500H18.500V16H.5ZM5.500 3.500V16" fill="#fff" stroke="#888" /><path d="M9 3.500H15V16H9Z" fill="#35c04a" /><path d="M9.500 0H14.500L12 3Z" fill="#2a76b8" /></svg><i class="dd" /></span>
                  <span><svg width="19" height="19" viewBox="0 0 19 19"><path d="M.5 0V7M18.500 0V7M2 3.500H17M5 1L2 3.500L5 6M14 1L17 3.500L14 6" fill="none" stroke="#2a76b8" /><path d="M.5 9.500H18.500V18.500H.5ZM.5 12H18.500M5 12V18.500M9.500 12V18.500M14 12V18.500" fill="#fff" stroke="#888" /></svg></span>
                </div>
              </div>
              <label>Current view</label>
            </div>
            <div class="group g-show">
              <div class="gbody">
                <div class="checks"><span v-for="c in ['Item check boxes', 'File name extensions', 'Hidden items']" :key="c"><svg width="16" height="16" viewBox="0 0 16 16"><path d="M.7.7H15.300V15.300H.7Z" fill="#fff" stroke="#555" stroke-width="1.300" /><path d="M4 7.500L7 11L12.500 4.500" fill="none" stroke="#1d2733" stroke-width="2.200" /></svg>{{ c }}</span></div>
                <div class="big hide-big"><svg width="26" height="34" viewBox="0 0 26 34"><path d="M1 33V1H19L25 7" fill="#fff" stroke="#9a9a9a" /><path d="M1 33L25 10M19 1V7H25" fill="none" stroke="#9a9a9a" /><path d="M25 10V33H1" fill="none" stroke="#4a98d6" stroke-dasharray="2.500 2" /></svg><span>Hide selected<br />items</span></div>
              </div>
              <label>Show/hide</label>
            </div>
            <div class="group g-opt"><div class="gbody"><div class="big"><svg width="34" height="26" viewBox="0 0 34 26"><path d="M1 1H33V25H1Z" fill="#fff" stroke="#8d98a3" stroke-width="1.600" /><path d="M7 7l2 2 3-4M7 13l2 2 3-4M7 19l2 2 3-4" fill="none" stroke="#2a86d6" stroke-width="1.400" /><path d="M14 8H29M14 14H29M14 20H29" stroke="#b9aeb0" /></svg><span>Options<br /><i class="dd" /></span></div></div></div>
          </div>

          <div class="addr">
            <svg class="a1" width="15" height="12" viewBox="0 0 15 12"><path d="M15 6H1.500M6 1L1.500 6L6 11" fill="none" stroke="#cfcfcf" stroke-width="1.600" /></svg>
            <svg class="a2" width="14" height="12" viewBox="0 0 14 12"><path d="M0 6H12.500M8 1L12.500 6L8 11" fill="none" stroke="#cfcfcf" stroke-width="1.600" /></svg>
            <svg class="a3" width="7" height="5" viewBox="0 0 7 5"><path d="M.5 1L3.500 4L6.500 1" fill="none" stroke="#d2d2d2" stroke-width="1.300" /></svg>
            <svg class="a4" width="14" height="14" viewBox="0 0 14 14"><path d="M7 14V1.500M1 7.500L7 1.500L13 7.500" fill="none" stroke="#6a6a6a" stroke-width="2" /></svg>
            <div class="path"><svg width="17" height="20"><use href="#folder" /></svg><svg class="chev" width="6" height="9" viewBox="0 0 6 9"><path d="M1 .5L5 4.500L1 8.500" fill="none" stroke="#555" stroke-width="1.500" /></svg><span>setup</span>
              <svg class="pd" width="11" height="7" viewBox="0 0 11 7"><path d="M1 1L5.500 5.500L10 1" fill="none" stroke="#666" stroke-width="2" /></svg>
              <div class="ref"><svg width="12" height="13" viewBox="0 0 12 13"><path d="M3.500 2.500A5 5 0 1 0 8.500 2.500M10.500 .8H6.800V4.500" fill="none" stroke="#666" stroke-width="1.700" /></svg></div>
            </div>
            <div class="find"><span>Search setup</span><svg width="14" height="13" viewBox="0 0 14 13"><circle cx="9" cy="5" r="4" fill="none" stroke="#666" stroke-width="1.600" /><path d="M6 8L1 12.500" stroke="#666" stroke-width="2" /></svg></div>
          </div>

          <div class="wbody">
            <div class="tree">
              <div v-for="n in navItems" :key="n.label" class="node" :class="{ deep: n.deep, on: n.on }"><svg width="19" height="19"><use :href="'#' + n.icon" /></svg><span>{{ n.label }}</span></div>
            </div>
            <div class="vscroll">
              <svg width="10" height="7" viewBox="0 0 10 7"><path d="M1 6L5 2L9 6" fill="none" stroke="#555" stroke-width="2" /></svg><i />
              <svg width="10" height="7" viewBox="0 0 10 7"><path d="M1 1L5 5L9 1" fill="none" stroke="#555" stroke-width="2" /></svg>
            </div>
            <div class="list">
              <div class="cols"><i class="cb" /><span class="c-name">Name</span><svg class="sortmark" width="10" height="6" viewBox="0 0 10 6"><path d="M.5 5.500L5 1L9.500 5.500" fill="none" stroke="#888" /></svg><span class="c-date">Date modified</span><span class="c-type">Type</span><span class="c-size">Size</span></div>
              <div class="files">
                <div v-for="(f, i) in files" :key="f[0]" class="frow" :class="{ on: i === 8 }">
                  <svg v-if="i === 8" class="fcb" width="15" height="15" viewBox="0 0 15 15"><path d="M.6.6H14.400V14.400H.6Z" fill="#fff" stroke="#444" stroke-width="1.200" /><path d="M3 7.500L6 11L12.500 4" fill="none" stroke="#444" stroke-width="1.500" /></svg>
                  <i v-else class="fcb" /><svg class="fi" width="19" height="15"><use href="#exe" /></svg><span class="fn">{{ f[0] }}</span><span class="ft">Application</span><span class="fs">{{ f[1] }}</span>
                </div>
              </div>
              <div class="hscroll"><svg width="7" height="10" viewBox="0 0 7 10"><path d="M6 1L2 5L6 9" fill="none" stroke="#555" stroke-width="2" /></svg><i /><svg width="7" height="10" viewBox="0 0 7 10"><path d="M1 1L5 5L1 9" fill="none" stroke="#555" stroke-width="2" /></svg></div>
            </div>
          </div>
          <footer class="status"><span>9 items</span><span>1 item selected</span><span>12.0 KB</span><div class="vw"><svg width="19" height="16"><use href="#details" /></svg></div><svg width="16" height="14"><use href="#pic-sm" /></svg></footer>
        </div>

        <div class="ctx">
          <div v-for="(g, gi) in menu" :key="gi" class="ctx-group">
            <div v-for="m in g" :key="m.t" class="ctx-item" :class="{ bold: m.bold }"><i><svg v-if="m.icon" width="19" height="18"><use :href="'#' + m.icon" /></svg></i><span>{{ m.t }}</span><svg v-if="m.sub" width="10" height="17" viewBox="0 0 10 17"><path d="M1 1L8.500 8.500L1 16" fill="none" stroke="#444" stroke-width="1.200" /></svg></div>
          </div>
        </div>

        <div class="taskbar">
          <div class="start"><svg width="20" height="19" viewBox="0 0 20 19"><path d="M0 2.500L8.500 1.300V9H0ZM9.500 1.100L20 0V9H9.500ZM0 10H8.500V17.700L0 16.500ZM9.500 10H20V19L9.500 17.900Z" fill="#fff" /></svg></div>
          <div class="tsearch"><svg width="20" height="20" viewBox="0 0 20 20"><circle cx="12.500" cy="7" r="6" fill="none" stroke="#222" stroke-width="1.400" /><path d="M8.500 11.500L1 19" stroke="#222" stroke-width="1.600" /></svg><span>Type here to search</span></div>
          <div class="tapp tv"><svg width="20" height="18" viewBox="0 0 20 18"><path d="M1 0V3.500H13V0M1 18V14.500H13V18M1 5.500H13V12.500H1ZM18 0V4M18 8V18" fill="none" stroke="#e8eef2" stroke-width="1.500" /><path d="M16.500 4.500H19.500V7.500H16.500Z" fill="#fff" /></svg></div>
          <div class="tapp"><svg width="29" height="29"><use href="#edge" /></svg></div>
          <div class="tapp active"><svg width="26" height="24" viewBox="0 0 26 24"><path d="M0 1H9L12 4H26V23H0Z" fill="#f5bd3a" /><path d="M1 7H25V20H1Z" fill="#ffdc73" /><path d="M6 13H20V23H16V18H10V23H6Z" fill="#3f8ed2" /></svg></div>
          <div class="tapp"><svg width="27" height="27"><use href="#firefox" /></svg></div>
          <div class="tapp run"><svg width="24" height="17"><use href="#exe" /></svg></div>
          <div class="tray">
            <svg width="15" height="8" viewBox="0 0 15 8"><path d="M1 7L7.500 1L14 7" fill="none" stroke="#e8ecf2" stroke-width="1.500" /></svg>
            <svg width="15" height="20" viewBox="0 0 15 20"><path d="M1.500 5.500H9.500V14.500H1.500ZM9.500 9L13.500 6.500V13.500L9.500 11M3 2.500C5 .5 9 .5 11.500 2.500M3 17.500C5 19.500 9 19.500 11.500 17.500" fill="none" stroke="#e8ecf2" stroke-width="1.500" /></svg>
            <svg width="20" height="18" viewBox="0 0 20 18"><path d="M6 3.500H19V13.500H4M11.500 13.500V17M7 17H16M1 2H6V7H1ZM3.500 7V16" fill="none" stroke="#e8ecf2" stroke-width="1.400" /></svg>
            <svg width="20" height="17" viewBox="0 0 20 17"><path d="M1 6H4L8 2V15L4 11H1ZM10.500 6C11.500 7.500 11.500 9.500 10.500 11M13.500 4C15.500 6.500 15.500 10.500 13.500 13M16 1.500C19 5 19 12 16 15.500" fill="none" stroke="#e8ecf2" stroke-width="1.400" /></svg>
            <div class="clock">11:01 PM<br />4/14/2025</div>
            <svg width="20" height="19" viewBox="0 0 20 19"><path d="M1 1H19V15H13L10 18L7 15H1Z" fill="none" stroke="#e8ecf2" stroke-width="1.400" /></svg>
          </div>
        </div>
      </section>

      <svg class="strip" width="1500" height="22"><rect width="1500" height="18" y="2" fill="#1f6285" /><rect v-for="b in stripBlocks" :key="b.x" :x="b.x" y="8" :width="b.w" height="6" :fill="b.on ? '#00b8a4' : '#144c6f'" /></svg>

      <section class="net">
        <div class="tabs">
          <div class="collapse"><i /></div>
          <div v-for="t in tabs" :key="t.t" class="tab" :class="{ on: t.on }" :style="{ width: t.w + 'px' }"><span>{{ t.t }}</span><em>{{ t.n }}</em></div>
          <div class="filter">Filter by PID, name or url</div>
          <div class="pcap"><svg width="13" height="15"><use href="#save" /></svg>PCAP</div>
        </div>
        <div class="net-body">
          <div class="rail"><div class="on"><svg width="21" height="21"><use href="#globe" /></svg></div><div><svg width="16" height="20"><use href="#doc2" /></svg></div><div><svg width="20" height="20"><use href="#bug" /></svg></div></div>
          <div class="table">
            <div class="thead"><span class="h1">Timeshift</span><span class="h2">Headers</span><span class="h3">Rep</span><span class="h4">PID</span><span class="h5">Process name</span><span class="h6">CN</span><span class="h7">URL</span><span class="h8">Content</span></div>
            <div class="tscroll">
              <div class="rows">
                <div v-for="(r, i) in requests" :key="r.ms" class="row">
                  <span class="ms">{{ r.ms }} ms</span>
                  <div class="resp" :class="{ bad: !r.ok }"><span>GET</span><i /><span>{{ r.ok ? '200: OK' : '404: Not Found' }}</span></div>
                  <div class="rep"><svg v-if="i === 0 || i > 3" width="18" height="24"><use href="#fire" /></svg><b v-else>?</b></div>
                  <span class="pid" :class="{ none: i === 0 }">{{ r.pid }}</span><span class="pname" :class="{ none: i === 0 }">{{ r.name }}</span>
                  <svg class="cn" width="22" height="17"><use :href="'#' + r.cn" /></svg>
                  <span class="url">{{ r.url[0] }}<mark v-if="r.url[1]">{{ r.url[1] }}</mark>{{ r.url[2] }}</span>
                  <div class="content" :class="r.kind"><span>{{ r.size }}</span><svg width="10" height="12"><use href="#down" /></svg><b>{{ r.kind }}</b></div>
                </div>
              </div>
              <div class="tbar"><i /></div>
            </div>
          </div>
        </div>
        <div class="redbox" />
      </section>
    </main>

    <aside class="info">
      <div class="alert"><div class="popup" /></div>
      <div class="summary">
        <div class="sum-top">
          <div class="os"><svg width="64" height="64" viewBox="0 0 64 64"><path d="M0 9L26.500 5.500V31H0ZM28.500 5L64 0V31H28.500ZM0 33H26.500V58.500L0 54.500ZM28.500 33H64V64L28.500 58.500Z" fill="#44a9e2" /></svg><span>Win10 64bit</span></div>
          <div class="meta">
            <h1>Setup.ZIP</h1>
            <p><b>MD5:</b>8F09880436E2D521</p>
            <p><b>Start:</b>15.04.2025, 06:59</p>
            <div class="tags"><span>loader</span><span>botnet</span><span>phorpiex</span></div>
            <div class="tags"><span>upx</span><span>xor-url</span><span>generic</span></div>
          </div>
        </div>
        <div class="inds"><b>Indicators:</b><svg v-for="n in indicators" :key="n" width="21" height="21"><use :href="'#' + n" /></svg></div>
        <div class="btns"><div class="bt solid get"><svg width="13" height="15"><use href="#save" /></svg>Get sample</div><div class="bt solid ioc"><svg width="16" height="15" viewBox="0 0 16 15"><path d="M1 1H15V14H1ZM5 4.500H12M5 7.500H12M5 10.500H12" fill="none" stroke="currentColor" stroke-width="1.600" /></svg></div></div>
        <div class="btns second"><div class="bt rep-btn">Text report</div><div class="bt graph">Graph</div></div>
      </div>
      <svg class="cpu" width="344" height="43"><rect v-for="(h, i) in cpu" :key="i" :x="i * 2" :y="42.500 - Math.abs(h)" width="1.600" :height="Math.abs(h)" :fill="h < 0 ? '#e0b650' : '#1273b4'" /></svg>
      <div class="pbar"><b>Processes</b><div>Filter by PID or name</div></div>
      <div class="plist">
        <svg class="links" width="160" height="738"><path d="M21.500 117V172Q21.500 177 26 177H54M21.500 356V569Q21.500 574 26 574H38M21.500 415H38M54.500 435V490Q54.500 495 59 495H87M54.500 594V649Q54.500 654 59 654H71M87.500 674V738M87.500 733H104" fill="none" stroke="#0d5a84" /></svg>
        <div v-for="p in procs" :key="p.pid" class="proc" :style="{ paddingLeft: 15 + p.lvl * 33 + 'px' }">
          <i class="toggle" :class="{ show: p.open }" />
          <div class="card" :class="p.color">
            <div class="phead"><span class="ppid">{{ p.pid }}</span><span v-if="p.com" class="com">COM</span><div v-if="p.cert" class="certs"><svg class="green" width="24" height="24" viewBox="0 0 20 20"><use href="#p-cert" /></svg><svg width="18" height="24" viewBox="0 0 18 24"><path d="M1 3.500C5-1 13 0 14.500 8" fill="none" stroke="#7fbfe4" stroke-width="1.800" /><path d="M2 17l3 1v5l-3 .5Z" fill="#7fbfe4" /><circle cx="10.500" cy="16" r="4" fill="none" stroke="#7fbfe4" stroke-width="2.500" /><circle cx="10.500" cy="16" r="6" fill="none" stroke="#7fbfe4" stroke-width="2" stroke-dasharray="2.400 2.310" /></svg></div><b :style="{ marginLeft: p.pad + 'px' }">{{ p.name }}</b><span v-if="p.args" class="args">{{ p.args }}</span><em v-if="p.pe">PE</em><em v-if="p.pe2" class="pe2">PE</em></div>
            <div class="picons"><svg v-for="(n, k) in p.icons" :key="k" width="20" height="20"><use :href="'#' + n" /></svg></div>
          </div>
        </div>
      </div>
    </aside>
  </div>
</template>

<style>
body { margin: 0; overflow: hidden; background: #003f66; }
</style>

<style scoped>
* { box-sizing: border-box; }
.page { display: flex; width: 1920px; height: 1132px; overflow: hidden; position: relative; font-family: Roboto, "Liberation Sans", sans-serif; }
.sprite { position: absolute; width: 0; height: 0; }
svg { flex: none; display: block; }

.side { width: 74px; flex: none; display: flex; flex-direction: column; background: #004b78; border-right: 1px solid #00294b; overflow: hidden; }
.brand { height: 105px; flex: none; background: #03426b; padding-top: 16px; }
.brand-logo { width: 66px; height: 70px; margin-left: -6px; color: #0eaeec; }
.side-body { flex: 1; min-height: 0; display: flex; flex-direction: column; background: linear-gradient(#0a5f94, #004b78 70px); }
.new { flex: none; margin: 15px 0 0 -13px; width: 80px; height: 63px; padding: 8px 0 0; border: 0; border-radius: 6px; background: #059fdc; display: flex; flex-direction: column; align-items: center; box-shadow: 0 0 6px rgba(0, 30, 60, .35); font: 700 14px/15px "Noto Sans", "Open Sans", sans-serif; color: #03355c; }
.new span { margin-top: 3px; letter-spacing: -.5px; }
.side-nav { width: 54px; flex: none; display: flex; flex-direction: column; }
.side-nav a { height: 75px; display: flex; flex-direction: column; align-items: center; justify-content: flex-start; color: #62abd9; font: 700 14px/18px "Noto Sans", "Open Sans", sans-serif; white-space: nowrap; }
.side-nav a svg { height: 28px; }
.side-nav a span { margin-top: 9px; letter-spacing: -.5px; }
.side-nav.top { margin-top: 27px; }
.side-nav.bottom { margin-top: 536px; }

.main { width: 1500px; flex: none; display: flex; flex-direction: column; }
.desktop { position: relative; height: 842px; flex: none; overflow: hidden; background: linear-gradient(100deg, #00a2fa 0%, #00b2ff 28%, #00a6f6 42%, #0082e6 56%, #006ce0 70%, #0052d8 84%, #003fbd 100%); font-family: "Open Sans", "Noto Sans", sans-serif; font-size: 12.5px; }
.desktop::before { content: ""; position: absolute; inset: 0; background: linear-gradient(rgba(0, 100, 225, .28), rgba(0, 110, 240, 0) 200px), linear-gradient(100deg, transparent 60%, rgba(0, 40, 140, .08)); }
.shortcuts { position: relative; width: 264px; display: grid; grid-template-columns: 87px 88px 88px; grid-auto-rows: 126.600px; }
.shortcut { display: flex; flex-direction: column; align-items: center; padding-top: 6px; color: #f2fbff; font-size: 12.5px; line-height: 17.500px; text-align: center; }
.shortcut:nth-child(3n + 2), .shortcut:nth-child(3n) { padding-right: 1px; }
.shortcut span { width: 84px; margin-top: 5px; white-space: normal; letter-spacing: .2px; }
.ico { position: relative; height: 56px; }
.link { position: absolute; left: 0; bottom: 0; }
.watermark { position: absolute; left: 1216px; top: 712px; color: rgba(150, 180, 236, .78); }
.watermark text { font: 400 62px "Open Sans", sans-serif; fill: rgba(150, 180, 236, .78); stroke: rgba(150, 180, 236, .5); stroke-width: 1.5px; }

.window { position: absolute; left: 331px; top: 14px; width: 922px; height: 695px; background: #fff; border: 1px solid #9fd0f0; display: flex; flex-direction: column; color: #333; letter-spacing: .14px; }
.title { height: 36px; flex: none; display: flex; }
.quick { width: 269px; display: flex; align-items: flex-start; padding: 8px 0 0 12px; }
.bar { width: 1px; height: 16px; background: #aaa; margin: 1px 0 0 8px; }
.q2 { margin-left: 13px; }
.q3 { margin-left: 11px; }
.q4 { margin: 8px 0 0 8px; }
.q5 { margin-left: 9px; }
.manage { width: 139px; margin-top: 4px; background: #eac8fa; text-align: center; line-height: 33px; color: #4a3a58; }
.caption { margin-left: 16px; line-height: 37px; color: #111; flex: 1; }
.wbtns { width: 119px; margin: 11px 21px 0 0; display: flex; justify-content: space-between; }
.rtabs { height: 28px; flex: none; display: flex; border-bottom: 1px solid #dcdde0; line-height: 28px; padding-left: 1px; }
.file { width: 65px; background: #0461ae; color: #fff; font-weight: 400; text-align: center; }
.t-home { width: 68px; text-align: center; }
.t-share { width: 70px; text-align: center; }
.t-view { width: 62px; text-align: center; background: #f5f6f8; border: 1px solid #dcdde0; border-bottom: 0; height: 28px; line-height: 26px; }
.t-tools { width: 139px; margin-left: 3px; text-align: center; border: solid #e5dfe8; border-width: 0 1px; }
.help { flex: 1; display: flex; justify-content: flex-end; align-items: center; gap: 11px; padding-right: 4px; }
.help em { width: 19px; height: 19px; border-radius: 50%; background: #0b63b8; color: #fff; font: 700 14px/19px "Open Sans", sans-serif; text-align: center; }
.ribbon { height: 108px; flex: none; display: flex; background: #f5f6f8; border-bottom: 1px solid #dadbdd; padding: 4px 0 4px 1px; }
.group { border-right: 1px solid #dedfe1; display: flex; flex-direction: column; height: 100px; }
.gbody { height: 83px; flex: none; display: flex; }
.group label { text-align: center; line-height: 20px; height: 20px; color: #5a5f66; }
.g-panes { width: 196px; }
.g-layout { width: 295px; }
.g-current { width: 97px; }
.g-show { width: 259px; }
.g-opt { width: 69px; }
.big { display: flex; flex-direction: column; align-items: center; text-align: center; line-height: 15.500px; white-space: nowrap; }
.dd { display: inline-block; border: 3px solid transparent; border-top: 4px solid #333; border-bottom: 0; vertical-align: 2px; }
.nav-big { width: 83px; padding-top: 10px; }
.nav-big span { margin-top: 11px; }
.two { display: flex; flex-direction: column; padding-top: 14px; gap: 17px; margin-left: -2px; }
.two span { display: flex; align-items: center; gap: 4px; line-height: 17px; white-space: nowrap; letter-spacing: .05px; }
.gallery { width: 260px; height: 70px; margin: 4px 0 0 5px; border: 1px solid #d7dbe0; background: #fbfcfe; display: grid; grid-template-columns: 130px 128px; grid-auto-rows: 23px; }
.gallery span { display: flex; align-items: center; padding-left: 3px; white-space: nowrap; line-height: 20px; }
.gallery svg { width: 18px; margin-right: 7px; }
.gallery .sel { background: #cbe3fb; border: 1px solid #6fa6dd; padding-left: 2px; }
.gscroll { width: 17px; margin-top: 4px; height: 70px; border: 1px solid #e1e3e6; border-left: 0; display: flex; flex-direction: column; align-items: center; justify-content: space-around; }
.gscroll .up { border: 3px solid transparent; border-bottom: 4px solid #aaa; border-top: 0; }
.more { position: relative; }
.more::before { content: ""; position: absolute; left: -4px; top: -7px; width: 8px; height: 1px; background: #444; }
.sort-big { width: 58px; padding: 7px 0 0 2px; }
.sort-big span { margin-top: 6px; }
.three { display: flex; flex-direction: column; gap: 9px; padding-top: 5px; }
.three span { display: flex; align-items: center; gap: 5px; }
.checks { padding: 6px 0 0 9px; width: 168px; display: flex; flex-direction: column; gap: 10px; }
.checks span { display: flex; align-items: center; height: 16px; gap: 7px; white-space: nowrap; line-height: 16px; }
.hide-big { width: 80px; padding-top: 6px; }
.hide-big span { margin-top: 7px; }
.g-opt .big { width: 66px; padding-top: 10px; }
.g-opt .big span { margin-top: 10px; }

.addr { height: 40px; flex: none; display: flex; padding-top: 7px; }
.a1 { margin: 7px 0 0 15px; }
.a2 { margin: 7px 0 0 20px; }
.a3 { margin: 11px 0 0 18px; }
.a4 { margin: 5px 0 0 14px; }
.path { width: 530px; height: 26px; margin-left: 9px; border: 1px solid #d9d9d9; display: flex; align-items: center; padding-left: 3px; color: #222; }
.chev { margin-left: 8px; }
.path span { margin-left: 12px; flex: 1; line-height: 22px; }
.pd { margin-right: 4px; }
.ref { width: 21px; height: 24px; border-left: 1px solid #d9d9d9; display: flex; align-items: center; justify-content: center; }
.find { width: 237px; height: 26px; margin-left: 14px; border: 1px solid #d9d9d9; display: flex; align-items: center; justify-content: space-between; padding: 0 10px 2px 9px; color: #6d6d6d; }

.wbody { height: 454px; flex: none; display: flex; padding-left: 1px; }
.tree { width: 164px; overflow: hidden; display: flex; flex-direction: column; padding-top: 1px; border-right: 1px solid #fff; }
.node { height: 28.150px; flex: none; display: flex; align-items: center; padding-left: 37px; white-space: nowrap; color: #222; overflow: hidden; font-size: 12.8px; letter-spacing: .3px; }
.node.deep { padding-left: 46px; }
.node svg { margin-right: 6px; }
.node.on { background: #d9d9d9; }
.vscroll { width: 18px; background: #f0f0f0; display: flex; flex-direction: column; align-items: center; justify-content: space-between; padding: 8px 0 5px; }
.vscroll i { width: 18px; height: 137px; margin-top: auto; margin-bottom: 9px; background: #cbcbcb; }
.list { flex: 1; display: flex; flex-direction: column; min-width: 0; }
.cols { height: 31px; display: flex; align-items: center; color: #5a6a80; padding-left: 18px; position: relative; }
.cb { width: 16px; height: 16px; border: 1.500px solid #444; }
.c-name { margin-left: 11px; width: 277px; }
.sortmark { position: absolute; left: 166px; top: 1px; }
.c-date, .c-type, .c-size { border-left: 1px solid #e3e3e3; line-height: 30px; padding-left: 8px; }
.c-date { width: 169px; }
.c-type { width: 141px; }
.c-size { width: 93px; border-right: 1px solid #e3e3e3; }
.files { flex: 1; padding-top: 6px; }
.frow { width: 700px; height: 24.700px; margin-left: 22px; display: flex; align-items: center; border: 1px solid transparent; white-space: nowrap; }
.frow.on { background: #cce8ff; border-color: #9bcbee; }
.fcb { width: 15px; margin-left: 4px; flex: none; }
.fi { margin-left: 2px; }
.fn { margin-left: 5px; width: 432px; color: #222; letter-spacing: 0; }
.ft { flex: 1; color: #666; font-size: 13px; letter-spacing: .35px; }
.fs { color: #666; padding-right: 3px; }
.hscroll { height: 17px; margin: 0 1px 1px 5px; background: #f0f0f0; display: flex; align-items: center; padding: 0 5px; }
.hscroll i { flex: 1; height: 17px; margin: 0 9px 0 8px; background: #cbcbcb; }
.status { height: 27px; flex: none; display: flex; align-items: center; color: #3e5872; padding-left: 17px; font-size: 12.5px; letter-spacing: .3px; }
.status span:nth-child(1) { width: 69px; }
.status span:nth-child(2) { width: 100px; white-space: nowrap; }
.status span:nth-child(3) { flex: 1; letter-spacing: 0; }
.vw { width: 26px; height: 27px; background: #c4e5f8; border: 1px solid #5eb1e2; display: flex; align-items: center; justify-content: center; margin-right: 5px; }
.status > svg { margin-right: 9px; }

.ctx { position: absolute; left: 684px; top: 252px; width: 346px; height: 543px; background: #eee; border: 1px solid #b0b0b0; padding-top: 5px; color: #1d1d1d; letter-spacing: .37px; box-shadow: 1px 1px 2px rgba(0, 0, 0, .15); }
.ctx-group + .ctx-group { margin-top: 4px; padding-top: 4.300px; position: relative; }
.ctx-group + .ctx-group::before { content: ""; position: absolute; left: 12px; right: 12px; top: 0; border-top: 1px solid #919191; }
.ctx-item { height: 25.780px; display: flex; align-items: center; padding-left: 12px; white-space: nowrap; }
.ctx-item i { width: 28.500px; }
.ctx-item span { flex: 1; }
.ctx-item > svg { margin-right: 12px; }
.ctx-item.bold { font-weight: 700; }

.taskbar { position: absolute; left: 0; top: 795px; width: 1500px; height: 47px; background: linear-gradient(90deg, #00111e, #000a18 60%, #02030f); display: flex; }
.start { width: 56px; display: flex; align-items: center; justify-content: center; }
.tsearch { width: 338px; height: 46px; background: #f2f2f2; border: 1px solid #ccc; display: flex; align-items: center; padding-left: 13px; gap: 12px; font-size: 16.500px; color: #333; }
.tsearch span { letter-spacing: -.1px; margin-left: 1px; }
.tapp { width: 58px; display: flex; align-items: center; justify-content: center; }
.tv { width: 58px; }
.active { width: 57px; background: #364650; border-bottom: 3px solid #76b9ed; }
.run { border-bottom: 2px solid #76b9ed; }
.tray { margin-left: auto; width: 243px; display: flex; align-items: center; position: relative; }
.tray::after { content: ""; position: absolute; right: 5px; top: 0; height: 47px; width: 1px; background: #777; }
.tray svg:nth-child(2) { margin-left: 13px; }
.tray svg:nth-child(3) { margin-left: 11px; }
.tray svg:nth-child(4) { margin-left: 8px; }
.clock { width: 84px; margin: -2px 9px 0 0; text-align: center; color: #eef2f6; line-height: 21px; font-size: 13.500px; letter-spacing: -.35px; white-space: nowrap; }

.strip { background: #00446e; width: 1500px; }
.net { height: 268px; flex: none; background: #002042; position: relative; display: flex; flex-direction: column; padding-top: 2px; overflow: hidden; }
.tabs { height: 30px; flex: none; display: flex; padding-left: 1px; }
.collapse { width: 29px; display: flex; align-items: center; justify-content: center; background: #002a4c; }
.collapse i { border: 7px solid transparent; border-top: 0; border-bottom: 6px solid #a5dcf6; }
.tab { margin-right: 2px; background: #02608f; color: #9bd4f5; display: flex; align-items: center; justify-content: space-between; padding: 0 6px 1px 12px; font-size: 18px; font-weight: 500; letter-spacing: -.1px; white-space: nowrap; }
.tab em { width: 29px; height: 21px; border-radius: 2px; background: #013b63; color: #5f9dc0; font: 400 16px/21px Roboto, sans-serif; text-align: center; }
.tab.on { background: #0d84c6; color: #d8f1ff; }
.tab.on em { color: #c6e6f8; font-weight: 500; }
.filter { margin: 1px 0 0 399px; width: 280px; height: 26px; border-radius: 2px; background: #004f7a; color: #4587ad; font-size: 15.500px; line-height: 26px; padding-left: 7px; letter-spacing: -.05px; }
.pcap { margin-left: 28px; display: flex; align-items: center; gap: 6px; color: #e8f6ff; font-size: 18px; font-weight: 500; letter-spacing: -.4px; height: 28px; }
.pcap svg { color: #b8d4e6; }
.net-body { flex: 1; min-height: 0; display: flex; }
.rail { width: 33px; padding-left: 1px; background: #00325a; color: #7d97a8; border-right: 2px solid #002040; }
.rail div { width: 30px; height: 39px; display: flex; align-items: center; justify-content: center; }
.rail .on { height: 39px; background: #0d84c6; color: #fff; margin-top: 1px; }
.table { width: 1467px; font-size: 16px; }
.thead { height: 28px; background: #002d50; color: #d5f0f6; display: flex; align-items: center; line-height: 21px; font-size: 16.800px; padding-bottom: 1px; }
.thead span { border-right: 1px solid #00203f; white-space: nowrap; }
.h1 { width: 105px; padding-left: 22px; }
.h2 { width: 232px; padding-left: 8px; }
.h3 { width: 50px; padding-left: 9px; }
.h4 { width: 75px; text-align: right; padding-right: 9px; }
.h5 { width: 195px; padding-left: 8px; }
.h6 { width: 45px; padding-left: 9px; }
.h7 { width: 524px; padding-left: 33px; }
.h8 { flex: 1; padding-left: 10px; }
.tscroll { height: 208px; overflow: hidden; display: flex; background: #003f66; }
.rows { width: 1461px; margin-top: -9px; }
.row { height: 33px; display: flex; align-items: center; background: #003f66; color: #639fc4; white-space: nowrap; }
.row:nth-child(even) { background: #003457; }
.ms { width: 96px; text-align: right; margin-right: 9px; letter-spacing: -.3px; }
.resp { width: 232px; height: 27px; border-radius: 3px; background: #078d80; color: #e8fbf6; font-weight: 500; display: flex; align-items: center; padding-left: 39px; font-size: 16.500px; letter-spacing: -.05px; }
.resp.bad { background: #b8333c; }
.resp i { width: 1px; height: 11px; background: rgba(255, 255, 255, .4); margin: 0 11px 0 9px; }
.rep { width: 50px; padding-left: 9px; color: #a9cfe0; font-size: 18px; }
.rep b { margin-left: 1px; font-weight: 500; }
.pid { width: 66px; text-align: right; }
.pname { width: 212px; padding-left: 17px; }
.none { color: #a9cfe0; }
.cn { width: 22px; }
.url { width: 543px; padding-left: 47px; letter-spacing: .03px; }
.url mark { background: #ff9933; color: #1b3340; padding: 1px 0; }
.content { width: 222px; height: 27px; border-radius: 3px; background: #078d80; display: flex; align-items: center; color: #e4f3f2; }
.content span { width: 93px; text-align: right; }
.content svg { margin: 1px 13px 0 14px; opacity: .75; }
.content b { font-weight: 500; letter-spacing: -.02px; }
.content.binary { background: #c86300; }
.content.executable { background: #b8333c; }
.tbar { width: 6px; background: #003a60; padding-top: 36px; }
.tbar i { display: block; height: 29px; border-radius: 3px; background: #3f88b8; }
.redbox { position: absolute; left: 680px; top: 148px; width: 484px; height: 44px; border: 3px solid #ec1c24; }

.info { width: 346px; flex: none; border-left: 2px solid #00294b; display: flex; flex-direction: column; overflow: hidden; }
.alert { height: 21px; flex: none; background: #ec5f59; position: relative; }
.popup { height: 13px; margin-left: 118px; background: #fff; border-radius: 0 0 0 10px; box-shadow: 0 2px 12px 2px rgba(0, 0, 0, .35); }
.summary { height: 296px; flex: none; background: #0c4468; padding: 13px 0 0 18px; }
.sum-top { display: flex; height: 154px; }
.os { width: 108px; display: flex; flex-direction: column; align-items: center; color: #4db8f5; font-size: 18px; margin-right: 24px; font-weight: 500; white-space: nowrap; letter-spacing: -.1px; flex: none; }
.os span { margin-top: 8px; line-height: 22px; }
.meta h1 { margin: 0 0 4px; display: inline-block; font-size: 21px; font-weight: 500; line-height: 22px; height: 25px; color: #fff; border-bottom: 2px dashed #fff; letter-spacing: 0; }
.meta p { margin: 0; line-height: 23px; color: #93b2c4; font-size: 17px; white-space: nowrap; }
.meta p b { color: #4db8f5; font-weight: 500; margin-right: 7px; }
.tags { display: flex; gap: 6px; margin-top: 6px; }
.tags span { height: 21px; border-radius: 11px; background: #137bbd; color: #fff; padding: 0 12px; font-size: 14.800px; line-height: 20px; white-space: nowrap; }
.meta p + .tags { margin-top: 8px; }
.inds { display: flex; align-items: center; height: 21px; color: #9accec; gap: 9px; }
.inds b { width: 88px; flex: none; color: #4db8f5; font-weight: 500; font-size: 18px; letter-spacing: -.05px; }
.btns { display: flex; gap: 9px; margin-top: 18px; }
.btns.second { margin-top: 9px; }
.bt { display: flex; align-items: center; justify-content: center; gap: 12px; flex: none; font-size: 18px; font-weight: 500; height: 33px; border: 1px solid #2f78a6; border-radius: 3px; color: #b4cbd8; padding-bottom: 2px; }
.bt.solid { height: 36px; border: 0; background: #266d9b; color: #cde3f0; padding: 0 0 2px 4px; }
.bt svg { color: #8db3cb; }
.get { width: 226px; }
.ioc { width: 184px; }
.rep-btn { width: 179px; }
.graph { width: 179px; }
.cpu { flex: none; background: #00365c; border-top: 1px solid #2a6c98; border-bottom: 1px solid #2a7fa8; height: 44px; }
.pbar { height: 33px; flex: none; background: #002d50; display: flex; align-items: center; padding: 0 0 1px 18px; }
.pbar b { width: 97px; color: #cfe3ee; font-weight: 500; font-size: 18px; letter-spacing: -.15px; padding-bottom: 1px; }
.pbar div { flex: 1; height: 24px; background: #00507a; color: #4c8db3; font-size: 16px; line-height: 23px; padding-left: 7px; }
.plist { height: 738px; flex: none; background: #003f66; padding-top: 5px; position: relative; overflow: hidden; }
.links { position: absolute; left: 0; top: 0; }
.proc { display: flex; height: 67.500px; margin-bottom: 11.950px; }
.toggle { width: 13px; margin-right: 7px; height: 8px; margin-top: 11px; flex: none; }
.toggle.show { width: 14px; margin-right: 6px; background: #8ccbd6; clip-path: polygon(0 0, 100% 0, 100% 15%, 50% 100%, 0 15%); }
.card { flex: 1; min-width: 0; background: #045e8c; border-left: 4px solid #808080; border-radius: 2px 0 0 2px; overflow: hidden; }
.card.red { border-color: #e44a48; }
.card.orange { border-color: #f58b1c; }
.phead { height: 30px; display: flex; align-items: center; white-space: nowrap; }
.phead > * { flex: none; }
.ppid { height: 30px; padding: 0 9px; background: #003256; color: #6ea4c4; font-size: 16px; line-height: 29px; letter-spacing: -.3px; }
.com { width: 45px; height: 30px; background: #128fc8; color: #d9f2ff; font-weight: 500; font-size: 16px; line-height: 29px; text-align: center; letter-spacing: -.3px; }
.certs { width: 40px; display: flex; padding: 2px 0 0 1px; }
.certs .green { color: #00cdb8; margin-right: -4px; }
.phead b { font-weight: 500; font-size: 17px; color: #fff; letter-spacing: -.32px; }
.args { margin-left: 26px; color: #82c4ec; font-size: 16.500px; letter-spacing: -.2px; padding-bottom: 1px; }
.phead em { margin-left: 28px; width: 36px; height: 23px; border: 1px solid #1d94d2; border-radius: 2px; color: #c3e6f8; font: 500 16px/21px Roboto, sans-serif; text-align: center; }
.phead .pe2 { margin-left: 21px; }
.picons { display: flex; gap: 7px; padding: 8px 0 0 13px; color: #4c96c2; }
</style>
